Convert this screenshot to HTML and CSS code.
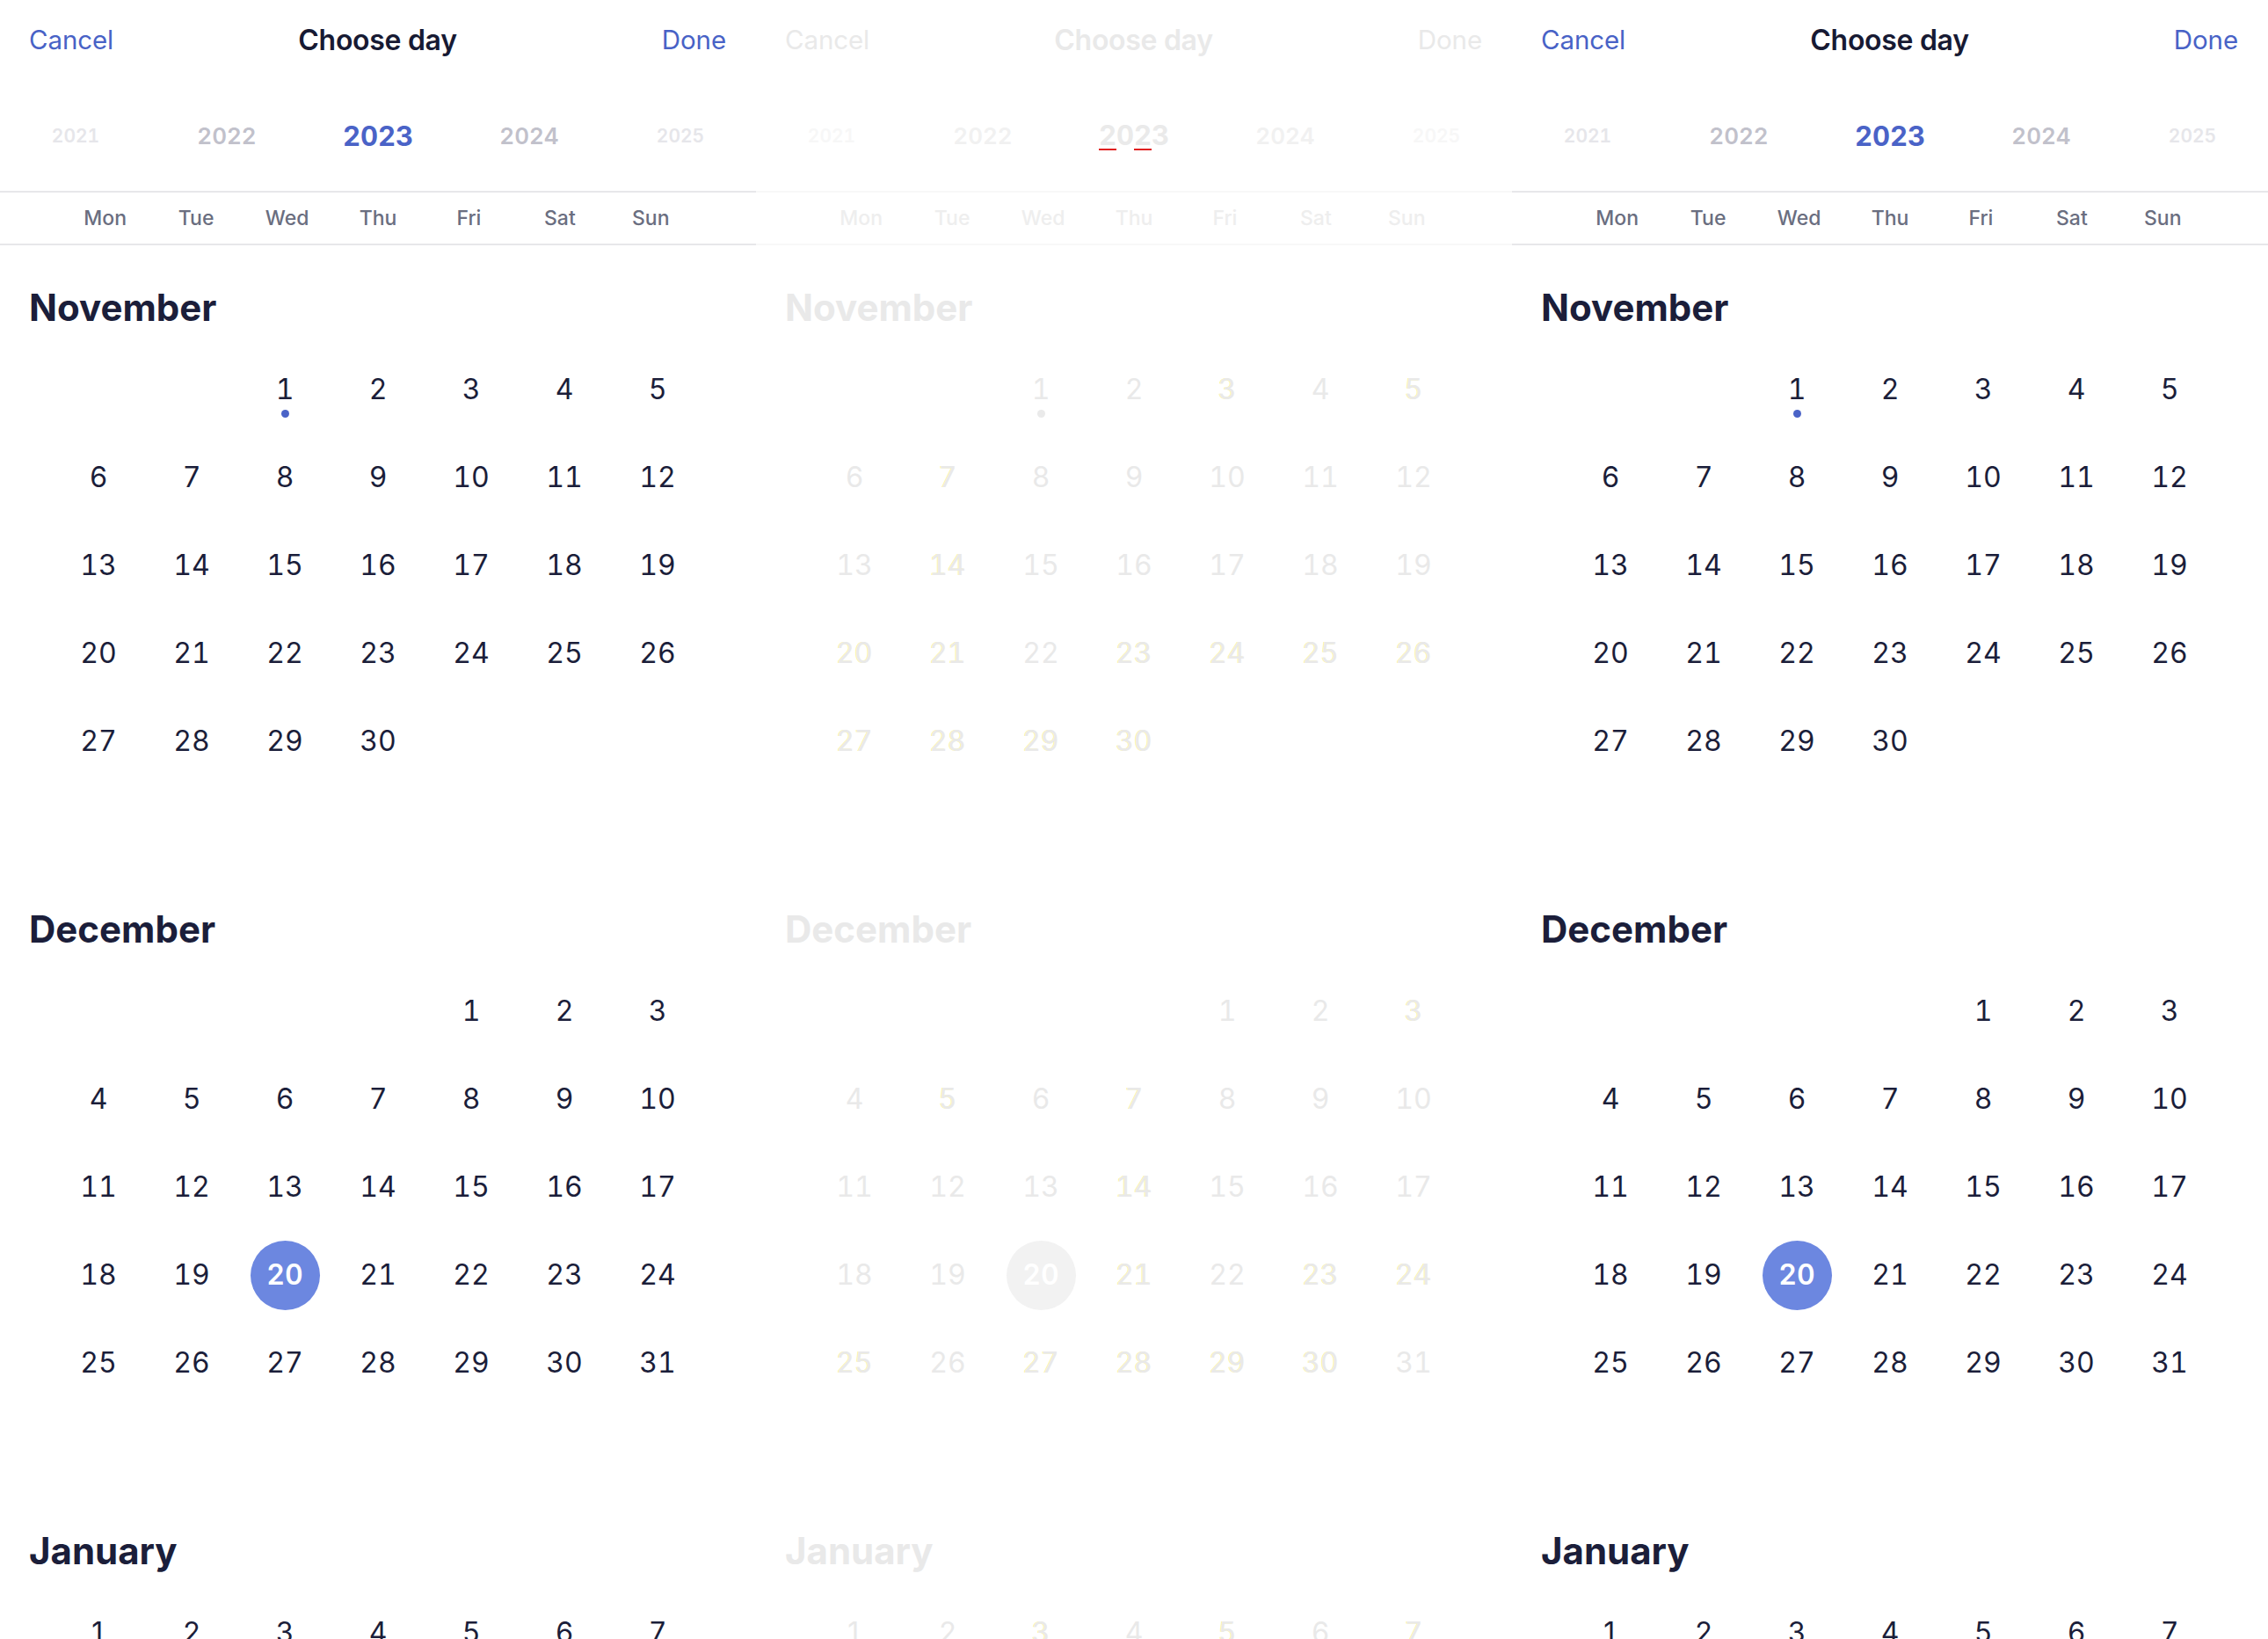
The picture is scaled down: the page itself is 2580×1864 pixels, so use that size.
FILE: index.html
```html
<!DOCTYPE html>
<html lang="en">
<head>
<meta charset="utf-8">
<title>Choose day</title>
<link rel="stylesheet" href="styles.css">
</head>
<body>
<div class="screens">

  <section class="panel">
    <header class="nav">
      <span class="link left">Cancel</span>
      <span class="title">Choose day</span>
      <span class="link right">Done</span>
    </header>
    <div class="years">
      <span class="year far">2021</span>
      <span class="year near">2022</span>
      <span class="year current">2023</span>
      <span class="year near">2024</span>
      <span class="year far">2025</span>
    </div>
    <div class="weekdays">
      <span>Mon</span><span>Tue</span><span>Wed</span><span>Thu</span><span>Fri</span><span>Sat</span><span>Sun</span>
    </div>
    <div class="months">
      <div class="month">
        <h2 class="month-name">November</h2>
        <div class="days">
          <span class="day start-3"><span class="num">1</span><span class="dot"></span></span>
          <span class="day"><span class="num">2</span></span>
          <span class="day"><span class="num">3</span></span>
          <span class="day"><span class="num">4</span></span>
          <span class="day"><span class="num">5</span></span>
          <span class="day"><span class="num">6</span></span>
          <span class="day"><span class="num">7</span></span>
          <span class="day"><span class="num">8</span></span>
          <span class="day"><span class="num">9</span></span>
          <span class="day"><span class="num">10</span></span>
          <span class="day"><span class="num">11</span></span>
          <span class="day"><span class="num">12</span></span>
          <span class="day"><span class="num">13</span></span>
          <span class="day"><span class="num">14</span></span>
          <span class="day"><span class="num">15</span></span>
          <span class="day"><span class="num">16</span></span>
          <span class="day"><span class="num">17</span></span>
          <span class="day"><span class="num">18</span></span>
          <span class="day"><span class="num">19</span></span>
          <span class="day"><span class="num">20</span></span>
          <span class="day"><span class="num">21</span></span>
          <span class="day"><span class="num">22</span></span>
          <span class="day"><span class="num">23</span></span>
          <span class="day"><span class="num">24</span></span>
          <span class="day"><span class="num">25</span></span>
          <span class="day"><span class="num">26</span></span>
          <span class="day"><span class="num">27</span></span>
          <span class="day"><span class="num">28</span></span>
          <span class="day"><span class="num">29</span></span>
          <span class="day"><span class="num">30</span></span>
        </div>
      </div>
      <div class="month">
        <h2 class="month-name">December</h2>
        <div class="days">
          <span class="day start-5"><span class="num">1</span></span>
          <span class="day"><span class="num">2</span></span>
          <span class="day"><span class="num">3</span></span>
          <span class="day"><span class="num">4</span></span>
          <span class="day"><span class="num">5</span></span>
          <span class="day"><span class="num">6</span></span>
          <span class="day"><span class="num">7</span></span>
          <span class="day"><span class="num">8</span></span>
          <span class="day"><span class="num">9</span></span>
          <span class="day"><span class="num">10</span></span>
          <span class="day"><span class="num">11</span></span>
          <span class="day"><span class="num">12</span></span>
          <span class="day"><span class="num">13</span></span>
          <span class="day"><span class="num">14</span></span>
          <span class="day"><span class="num">15</span></span>
          <span class="day"><span class="num">16</span></span>
          <span class="day"><span class="num">17</span></span>
          <span class="day"><span class="num">18</span></span>
          <span class="day"><span class="num">19</span></span>
          <span class="day selected"><span class="num">20</span></span>
          <span class="day"><span class="num">21</span></span>
          <span class="day"><span class="num">22</span></span>
          <span class="day"><span class="num">23</span></span>
          <span class="day"><span class="num">24</span></span>
          <span class="day"><span class="num">25</span></span>
          <span class="day"><span class="num">26</span></span>
          <span class="day"><span class="num">27</span></span>
          <span class="day"><span class="num">28</span></span>
          <span class="day"><span class="num">29</span></span>
          <span class="day"><span class="num">30</span></span>
          <span class="day"><span class="num">31</span></span>
        </div>
      </div>
      <div class="month">
        <h2 class="month-name">January</h2>
        <div class="days">
          <span class="day"><span class="num">1</span></span>
          <span class="day"><span class="num">2</span></span>
          <span class="day"><span class="num">3</span></span>
          <span class="day"><span class="num">4</span></span>
          <span class="day"><span class="num">5</span></span>
          <span class="day"><span class="num">6</span></span>
          <span class="day"><span class="num">7</span></span>
        </div>
      </div>
    </div>
  </section>

  <section class="panel ghost">
    <header class="nav">
      <span class="link left">Cancel</span>
      <span class="title">Choose day</span>
      <span class="link right">Done</span>
    </header>
    <div class="years">
      <span class="year far">2021</span>
      <span class="year near">2022</span>
      <span class="year current"><span class="ul">2</span>0<span class="ul">2</span>3</span>
      <span class="year near">2024</span>
      <span class="year far">2025</span>
    </div>
    <div class="weekdays">
      <span>Mon</span><span>Tue</span><span>Wed</span><span>Thu</span><span>Fri</span><span>Sat</span><span>Sun</span>
    </div>
    <div class="months">
      <div class="month">
        <h2 class="month-name">November</h2>
        <div class="days">
          <span class="day start-3"><span class="num">1</span><span class="dot"></span></span>
          <span class="day"><span class="num">2</span></span>
          <span class="day"><span class="num y">3</span></span>
          <span class="day"><span class="num">4</span></span>
          <span class="day"><span class="num y">5</span></span>
          <span class="day"><span class="num">6</span></span>
          <span class="day"><span class="num y">7</span></span>
          <span class="day"><span class="num">8</span></span>
          <span class="day"><span class="num">9</span></span>
          <span class="day"><span class="num">10</span></span>
          <span class="day"><span class="num">11</span></span>
          <span class="day"><span class="num">12</span></span>
          <span class="day"><span class="num">13</span></span>
          <span class="day"><span class="num y">14</span></span>
          <span class="day"><span class="num">15</span></span>
          <span class="day"><span class="num">16</span></span>
          <span class="day"><span class="num">17</span></span>
          <span class="day"><span class="num">18</span></span>
          <span class="day"><span class="num">19</span></span>
          <span class="day"><span class="num y">20</span></span>
          <span class="day"><span class="num y">21</span></span>
          <span class="day"><span class="num">22</span></span>
          <span class="day"><span class="num y">23</span></span>
          <span class="day"><span class="num y">24</span></span>
          <span class="day"><span class="num y">25</span></span>
          <span class="day"><span class="num y">26</span></span>
          <span class="day"><span class="num y">27</span></span>
          <span class="day"><span class="num y">28</span></span>
          <span class="day"><span class="num y">29</span></span>
          <span class="day"><span class="num y">30</span></span>
        </div>
      </div>
      <div class="month">
        <h2 class="month-name">December</h2>
        <div class="days">
          <span class="day start-5"><span class="num">1</span></span>
          <span class="day"><span class="num">2</span></span>
          <span class="day"><span class="num y">3</span></span>
          <span class="day"><span class="num">4</span></span>
          <span class="day"><span class="num y">5</span></span>
          <span class="day"><span class="num">6</span></span>
          <span class="day"><span class="num y">7</span></span>
          <span class="day"><span class="num">8</span></span>
          <span class="day"><span class="num">9</span></span>
          <span class="day"><span class="num">10</span></span>
          <span class="day"><span class="num">11</span></span>
          <span class="day"><span class="num">12</span></span>
          <span class="day"><span class="num">13</span></span>
          <span class="day"><span class="num y">14</span></span>
          <span class="day"><span class="num">15</span></span>
          <span class="day"><span class="num">16</span></span>
          <span class="day"><span class="num">17</span></span>
          <span class="day"><span class="num">18</span></span>
          <span class="day"><span class="num">19</span></span>
          <span class="day selected"><span class="num">20</span></span>
          <span class="day"><span class="num y">21</span></span>
          <span class="day"><span class="num">22</span></span>
          <span class="day"><span class="num y">23</span></span>
          <span class="day"><span class="num y">24</span></span>
          <span class="day"><span class="num y">25</span></span>
          <span class="day"><span class="num">26</span></span>
          <span class="day"><span class="num y">27</span></span>
          <span class="day"><span class="num y">28</span></span>
          <span class="day"><span class="num y">29</span></span>
          <span class="day"><span class="num y">30</span></span>
          <span class="day"><span class="num">31</span></span>
        </div>
      </div>
      <div class="month">
        <h2 class="month-name">January</h2>
        <div class="days">
          <span class="day"><span class="num">1</span></span>
          <span class="day"><span class="num">2</span></span>
          <span class="day"><span class="num y">3</span></span>
          <span class="day"><span class="num">4</span></span>
          <span class="day"><span class="num y">5</span></span>
          <span class="day"><span class="num">6</span></span>
          <span class="day"><span class="num y">7</span></span>
        </div>
      </div>
    </div>
  </section>

  <section class="panel">
    <header class="nav">
      <span class="link left">Cancel</span>
      <span class="title">Choose day</span>
      <span class="link right">Done</span>
    </header>
    <div class="years">
      <span class="year far">2021</span>
      <span class="year near">2022</span>
      <span class="year current">2023</span>
      <span class="year near">2024</span>
      <span class="year far">2025</span>
    </div>
    <div class="weekdays">
      <span>Mon</span><span>Tue</span><span>Wed</span><span>Thu</span><span>Fri</span><span>Sat</span><span>Sun</span>
    </div>
    <div class="months">
      <div class="month">
        <h2 class="month-name">November</h2>
        <div class="days">
          <span class="day start-3"><span class="num">1</span><span class="dot"></span></span>
          <span class="day"><span class="num">2</span></span>
          <span class="day"><span class="num">3</span></span>
          <span class="day"><span class="num">4</span></span>
          <span class="day"><span class="num">5</span></span>
          <span class="day"><span class="num">6</span></span>
          <span class="day"><span class="num">7</span></span>
          <span class="day"><span class="num">8</span></span>
          <span class="day"><span class="num">9</span></span>
          <span class="day"><span class="num">10</span></span>
          <span class="day"><span class="num">11</span></span>
          <span class="day"><span class="num">12</span></span>
          <span class="day"><span class="num">13</span></span>
          <span class="day"><span class="num">14</span></span>
          <span class="day"><span class="num">15</span></span>
          <span class="day"><span class="num">16</span></span>
          <span class="day"><span class="num">17</span></span>
          <span class="day"><span class="num">18</span></span>
          <span class="day"><span class="num">19</span></span>
          <span class="day"><span class="num">20</span></span>
          <span class="day"><span class="num">21</span></span>
          <span class="day"><span class="num">22</span></span>
          <span class="day"><span class="num">23</span></span>
          <span class="day"><span class="num">24</span></span>
          <span class="day"><span class="num">25</span></span>
          <span class="day"><span class="num">26</span></span>
          <span class="day"><span class="num">27</span></span>
          <span class="day"><span class="num">28</span></span>
          <span class="day"><span class="num">29</span></span>
          <span class="day"><span class="num">30</span></span>
        </div>
      </div>
      <div class="month">
        <h2 class="month-name">December</h2>
        <div class="days">
          <span class="day start-5"><span class="num">1</span></span>
          <span class="day"><span class="num">2</span></span>
          <span class="day"><span class="num">3</span></span>
          <span class="day"><span class="num">4</span></span>
          <span class="day"><span class="num">5</span></span>
          <span class="day"><span class="num">6</span></span>
          <span class="day"><span class="num">7</span></span>
          <span class="day"><span class="num">8</span></span>
          <span class="day"><span class="num">9</span></span>
          <span class="day"><span class="num">10</span></span>
          <span class="day"><span class="num">11</span></span>
          <span class="day"><span class="num">12</span></span>
          <span class="day"><span class="num">13</span></span>
          <span class="day"><span class="num">14</span></span>
          <span class="day"><span class="num">15</span></span>
          <span class="day"><span class="num">16</span></span>
          <span class="day"><span class="num">17</span></span>
          <span class="day"><span class="num">18</span></span>
          <span class="day"><span class="num">19</span></span>
          <span class="day selected"><span class="num">20</span></span>
          <span class="day"><span class="num">21</span></span>
          <span class="day"><span class="num">22</span></span>
          <span class="day"><span class="num">23</span></span>
          <span class="day"><span class="num">24</span></span>
          <span class="day"><span class="num">25</span></span>
          <span class="day"><span class="num">26</span></span>
          <span class="day"><span class="num">27</span></span>
          <span class="day"><span class="num">28</span></span>
          <span class="day"><span class="num">29</span></span>
          <span class="day"><span class="num">30</span></span>
          <span class="day"><span class="num">31</span></span>
        </div>
      </div>
      <div class="month">
        <h2 class="month-name">January</h2>
        <div class="days">
          <span class="day"><span class="num">1</span></span>
          <span class="day"><span class="num">2</span></span>
          <span class="day"><span class="num">3</span></span>
          <span class="day"><span class="num">4</span></span>
          <span class="day"><span class="num">5</span></span>
          <span class="day"><span class="num">6</span></span>
          <span class="day"><span class="num">7</span></span>
        </div>
      </div>
    </div>
  </section>

</div>
</body>
</html>
```

FILE: styles.css
```css
* { box-sizing: border-box; }

html, body {
  margin: 0;
  padding: 0;
  background: #ffffff;
}

body {
  width: 2580px;
  height: 1864px;
  overflow: hidden;
  font-family: "Inter", "Liberation Sans", sans-serif;
  color: #1b1e3a;
}

.screens {
  display: flex;
  align-items: flex-start;
  width: 2580px;
  height: 1864px;
  overflow: hidden;
}

.panel {
  width: 860px;
  flex: 0 0 860px;
  display: flex;
  flex-direction: column;
}

.panel > * {
  flex-shrink: 0;
}

/* ---------- nav bar ---------- */
.nav {
  height: 90px;
  padding: 0 34px 0 33px;
  display: grid;
  grid-template-columns: 1fr auto 1fr;
  align-items: center;
}

.link {
  font-size: 29.5px;
  font-weight: 400;
  color: #4862c6;
  letter-spacing: -0.1px;
}

.link.left { justify-self: start; }
.link.right { justify-self: end; }

.title {
  font-size: 32px;
  font-weight: 600;
  color: #171a33;
  letter-spacing: -0.3px;
}

/* ---------- year wheel ---------- */
.years {
  height: 129px;
  padding-top: 2px;
  display: grid;
  grid-template-columns: repeat(5, 1fr);
  align-items: center;
  justify-items: center;
  border-bottom: 2px solid #e7e7ea;
}

.year {
  font-variant-numeric: tabular-nums;
  line-height: 1;
}

.year.far {
  font-size: 21px;
  font-weight: 600;
  color: #e6e6ea;
}

.year.near {
  font-size: 26px;
  font-weight: 600;
  color: #c1c1cb;
}

.year.current {
  font-size: 31px;
  font-weight: 700;
  color: #4a63c7;
}

/* ---------- weekday header ---------- */
.weekdays {
  height: 60px;
  padding: 0 68px;
  display: grid;
  grid-template-columns: repeat(7, 1fr);
  align-items: center;
  justify-items: center;
  border-bottom: 2px solid #e7e7ea;
  font-size: 23px;
  font-weight: 500;
  color: #6a6e80;
}

/* ---------- months ---------- */
.months {
  padding-top: 46px;
  display: flex;
  flex-direction: column;
}

.month {
  flex-shrink: 0;
  margin-bottom: 139px;
}

.month-name {
  margin: 0 0 18px 0;
  padding-left: 33px;
  font-size: 42px;
  line-height: 50px;
  font-weight: 700;
  color: #1b1e3a;
  letter-spacing: 0;
}

.days {
  padding: 0 59px;
  display: grid;
  grid-template-columns: repeat(7, 106px);
  grid-auto-rows: 100px;
}

.day {
  position: relative;
  display: flex;
  align-items: center;
  justify-content: center;
}

.start-3 { grid-column-start: 3; }
.start-5 { grid-column-start: 5; }

.num {
  font-size: 32px;
  font-weight: 400;
  line-height: 1;
  color: #1b1e3a;
  font-variant-numeric: tabular-nums;
}

.dot {
  position: absolute;
  left: 50%;
  top: 50%;
  width: 9px;
  height: 9px;
  margin: 23px 0 0 -4.5px;
  border-radius: 50%;
  background: #4a63c7;
}

.day.selected .num {
  width: 79px;
  height: 79px;
  display: flex;
  align-items: center;
  justify-content: center;
  border-radius: 50%;
  background: #6c87e0;
  color: #ffffff;
  font-weight: 600;
}

/* ---------- ghost (faded) panel ---------- */
.ghost .link,
.ghost .title,
.ghost .month-name,
.ghost .num {
  color: #e9e9e9;
}

.ghost .weekdays {
  color: #eeeeee;
  border-bottom-color: #f8f8f8;
}

.ghost .years {
  border-bottom-color: #f8f8f8;
}

.ghost .year.far { color: #f7f7f7; }
.ghost .year.near { color: #f1f1f1; }
.ghost .year.current { color: #eaeaea; }

.ghost .ul {
  display: inline-block;
  border-bottom: 2px solid #e02020;
  line-height: 1;
}

.ghost .dot { background: #eaeaea; }

.ghost .day.selected .num {
  background: #f2f2f2;
  color: #ffffff;
}

.ghost .num.y {
  text-shadow: -1px 0 0 rgba(245, 236, 90, 0.55);
}
```
